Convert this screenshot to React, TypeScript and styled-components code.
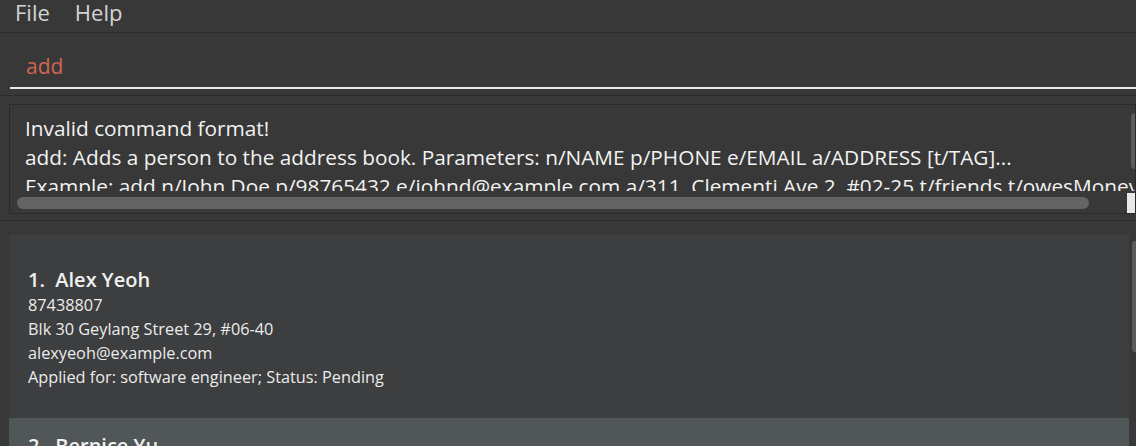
import React from "react";
import styled, { createGlobalStyle } from "styled-components";

const Global = createGlobalStyle`
  html, body { margin: 0; padding: 0; background: #383838; overflow: hidden; }
  body { font-family: "Open Sans", "Noto Sans", sans-serif; }
  * { box-sizing: border-box; }
`;

const Window = styled.div`
  width: 1136px;
  height: 446px;
  background: #383838;
  display: flex;
  flex-direction: column;
  overflow: hidden;
  & > * { flex-shrink: 0; }
`;

const MenuBar = styled.div`
  height: 33px;
  display: flex;
  align-items: flex-start;
  gap: 25px;
  padding: 0 0 0 15px;
  background: #383838;
  border-bottom: 1px solid #2b2b2b;
`;

const MenuItem = styled.span`
  font-size: 22px;
  line-height: 24px;
  color: #d4d4d4;
`;

const CommandSection = styled.div`
  height: 63px;
  padding: 0 0 0 10px;
  display: flex;
  flex-direction: column;
  justify-content: flex-end;
  border-bottom: 1px solid #2b2b2b;
`;

const CommandInput = styled.div`
  height: 40px;
  padding: 0 0 0 16px;
  border-bottom: 2px solid #e8e8e8;
  margin-bottom: 6px;
  font-size: 21px;
  line-height: 34px;
  color: #d06651;
`;

const ResultSection = styled.div`
  height: 125px;
  padding: 8px 0 0 9px;
  border-bottom: 1px solid #2b2b2b;
`;

const ResultBox = styled.div`
  position: relative;
  height: 110px;
  border: 1px solid #2a2a2a;
  overflow: hidden;
`;

const ResultViewport = styled.div`
  height: 86px;
  overflow: hidden;
  padding: 9px 0 0 15px;
`;

const ResultLine = styled.div`
  font-size: 20.8px;
  line-height: 29px;
  color: #f2f2f2;
  white-space: nowrap;
`;

const HScroll = styled.div`
  position: absolute;
  left: 7px;
  top: 92px;
  width: 1072px;
  height: 12px;
  border-radius: 6px;
  background: #646464;
`;

const VScroll = styled.div`
  position: absolute;
  right: -4px;
  top: 8px;
  width: 8px;
  height: 56px;
  border-radius: 4px;
  background: #5c5c5c;
`;

const Corner = styled.div`
  position: absolute;
  right: 0;
  top: 88px;
  width: 8px;
  height: 20px;
  background: #e8e8e8;
`;

const ListSection = styled.div`
  flex: 1;
  padding: 14px 0 0 9px;
  display: flex;
  overflow: hidden;
`;

const List = styled.div`
  flex: 1;
  display: flex;
  flex-direction: column;
`;

const Card = styled.div<{ $alt?: boolean }>`
  background: ${(p) => (p.$alt ? "#515658" : "#3c3e3f")};
  padding: ${(p) => (p.$alt ? "14px" : "31px")} 0 0 19px;
  height: ${(p) => (p.$alt ? "auto" : "183px")};
  flex-shrink: 0;
`;

const Name = styled.div`
  font-size: 20px;
  font-weight: 600;
  line-height: 27px;
  color: #f0f0f0;
  white-space: pre;
`;

const Detail = styled.div`
  font-size: 16.3px;
  line-height: 24px;
  color: #ececec;
`;

const ScrollTrack = styled.div`
  width: 7px;
  position: relative;
`;

const ScrollThumb = styled.div`
  position: absolute;
  left: 3px;
  top: 6px;
  width: 6px;
  height: 111px;
  border-radius: 3px;
  background: #5a5a5a;
`;

export default function App() {
  return (
    <Window>
      <Global />
      <MenuBar>
        <MenuItem>File</MenuItem>
        <MenuItem>Help</MenuItem>
      </MenuBar>
      <CommandSection>
        <CommandInput>add</CommandInput>
      </CommandSection>
      <ResultSection>
        <ResultBox>
          <ResultViewport>
            <ResultLine>Invalid command format!</ResultLine>
            <ResultLine>
              add: Adds a person to the address book. Parameters: n/NAME p/PHONE e/EMAIL a/ADDRESS [t/TAG]...
            </ResultLine>
            <ResultLine>
              Example: add n/John Doe p/98765432 e/johnd@example.com a/311, Clementi Ave 2, #02-25 t/friends t/owesMoney
            </ResultLine>
          </ResultViewport>
          <HScroll />
          <VScroll />
          <Corner />
        </ResultBox>
      </ResultSection>
      <ListSection>
        <List>
          <Card>
            <Name>{"1.  Alex Yeoh"}</Name>
            <Detail>87438807</Detail>
            <Detail>Blk 30 Geylang Street 29, #06-40</Detail>
            <Detail>alexyeoh@example.com</Detail>
            <Detail>Applied for: software engineer; Status: Pending</Detail>
          </Card>
          <Card $alt>
            <Name>{"2.  Bernice Yu"}</Name>
            <Detail>99272758</Detail>
          </Card>
        </List>
        <ScrollTrack>
          <ScrollThumb />
        </ScrollTrack>
      </ListSection>
    </Window>
  );
}
